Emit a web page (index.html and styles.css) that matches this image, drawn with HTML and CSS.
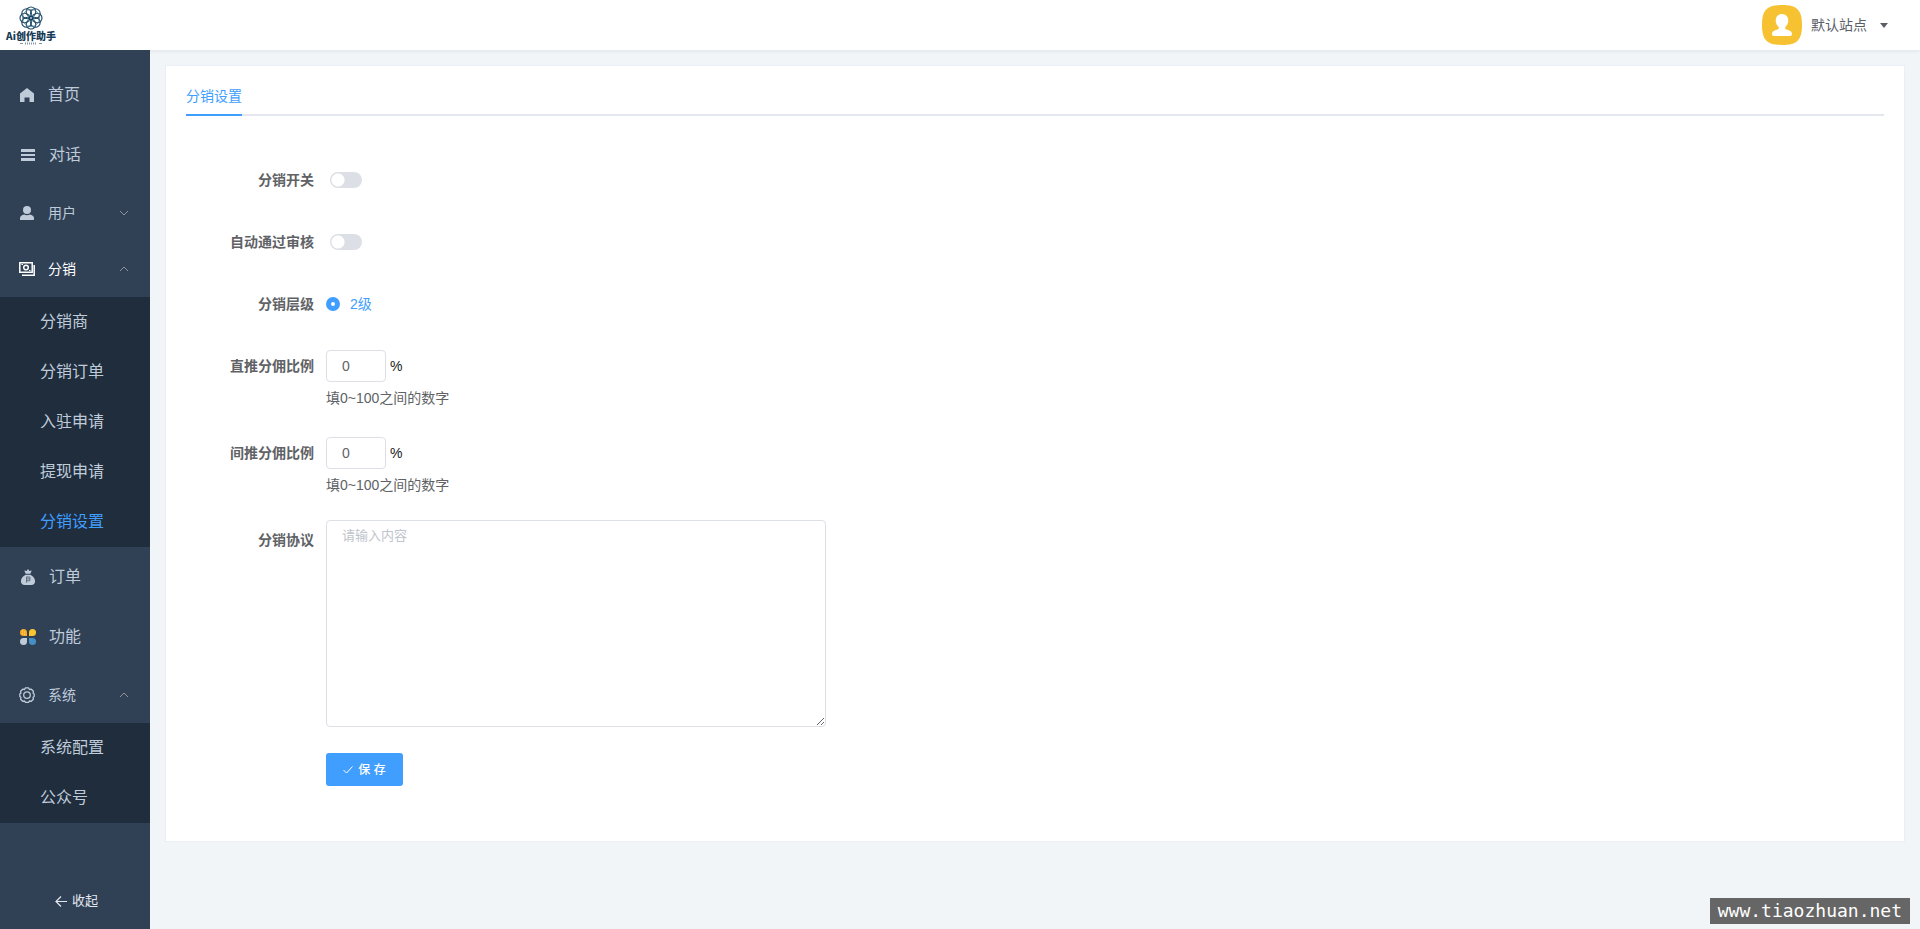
FILE: index.html
```html
<!DOCTYPE html>
<html lang="zh-CN">
<head>
<meta charset="utf-8">
<title>分销设置</title>
<link rel="stylesheet" href="styles.css">
</head>
<body>
<header class="topbar">
  <a class="logo" href="#" aria-label="Ai创作助手">
    <svg class="logo-mark" viewBox="0 0 26 24" fill="none" stroke="#1d4461" stroke-width="1.100">
      <ellipse cx="13" cy="5.800" rx="4.800" ry="4.800"/>
      <ellipse cx="13" cy="5.800" rx="4.800" ry="4.800" transform="rotate(45 13 12)"/>
      <ellipse cx="13" cy="5.800" rx="4.800" ry="4.800" transform="rotate(90 13 12)"/>
      <ellipse cx="13" cy="5.800" rx="4.800" ry="4.800" transform="rotate(135 13 12)"/>
      <ellipse cx="13" cy="5.800" rx="4.800" ry="4.800" transform="rotate(180 13 12)"/>
      <ellipse cx="13" cy="5.800" rx="4.800" ry="4.800" transform="rotate(225 13 12)"/>
      <ellipse cx="13" cy="5.800" rx="4.800" ry="4.800" transform="rotate(270 13 12)"/>
      <ellipse cx="13" cy="5.800" rx="4.800" ry="4.800" transform="rotate(315 13 12)"/>
      <g stroke="#4b86a8" stroke-width=".8"><circle cx="13" cy="12" r="8.500"/><circle cx="13" cy="12" r="3.500"/></g>
    </svg>
    <span class="logo-name">Ai创作助手</span>
    <svg class="logo-line" viewBox="0 0 22 3" stroke="#8497a5" stroke-width="1"><path d="M0 1.500h3M19 1.500h3"/><path d="M5 1.500h12" stroke-width="2" stroke-dasharray="1 1"/></svg>
  </a>
  <button class="account" type="button">
    <svg class="avatar" viewBox="0 0 40 40"><path fill="#f7c232" d="M20 0C35 0 40 5 40 20S35 40 20 40 0 35 0 20 5 0 20 0z"/><path fill="#fff" d="M20 9c4 0 6.300 3 6.300 6.500 0 3-1.300 5-3 6.500v2c3 1 6.700 2 6.700 5 0 1.500-1 2-2.500 2h-15c-1.500 0-2.500-.5-2.500-2 0-3 3.700-4 6.700-5v-2c-1.700-1.500-3-3.500-3-6.500C13.700 12 16 9 20 9z"/></svg>
    <span>默认站点</span>
    <svg class="caret" viewBox="0 0 8 5"><path fill="#5a5e66" d="M0 0h8L4 5z"/></svg>
  </button>
</header>
<div class="shell">
  <nav class="sidebar">
    <ul class="menu">
      <li><a class="item item-link" href="#"><svg class="icon" viewBox="0 0 16 16"><path fill="currentColor" d="M8 1l7 5.500V15h-4.500v-4.500h-5V15H1V6.500z"/></svg><span>首页</span></a></li>
      <li><a class="item item-link item-wide" href="#"><svg class="icon" viewBox="0 0 16 16"><path fill="currentColor" d="M1 2h14v3H1zM1 7h14v2H1zM1 11h14v3H1z"/></svg><span>对话</span></a></li>
      <li><button class="item item-group" type="button"><svg class="icon" viewBox="0 0 16 16"><circle cx="8" cy="5" r="4" fill="currentColor"/><path fill="currentColor" d="M1 15v-2c0-2 2-3 4-3.500 2 1 4 1 6 0 2 .5 4 1.500 4 3.500v1c0 .7-.3 1-1 1z"/></svg><span>用户</span><svg class="arrow" viewBox="0 0 10 6"><path d="M1 1l4 4 4-4"/></svg></button></li>
      <li>
        <button class="item item-group is-current" type="button"><svg class="icon" viewBox="0 0 16 16" fill="none" stroke="currentColor" stroke-width="1.500"><path d="M.8 1.800h12.400v9.400H.8zM15.200 4v10.200H3"/><circle cx="7" cy="6.500" r="2.300"/><path d="M2.500 3.500h1.500M10 9.500h1.500" stroke-width="1"/></svg><span>分销</span><svg class="arrow" viewBox="0 0 10 6"><path d="M1 5l4-4 4 4"/></svg></button>
        <ul class="submenu">
          <li><a href="#">分销商</a></li>
          <li><a href="#">分销订单</a></li>
          <li><a href="#">入驻申请</a></li>
          <li><a href="#">提现申请</a></li>
          <li><a class="is-active" href="#">分销设置</a></li>
        </ul>
      </li>
      <li><a class="item item-link item-wide" href="#"><svg class="icon" viewBox="0 0 16 17"><path fill="currentColor" d="M8 0l1.500 2L12 1.700 10.500 5h-5L4 1.700l2.500.3zM5.500 6h5C13.500 7.500 15.500 10 15.500 13c0 2.500-1.500 4-4 4h-7C2 17 .5 15.500.5 13c0-3 2-5.500 5-7z"/><path fill="none" stroke="#58697c" d="M6 8.500h4M6 10.500h4M6 12.500h4M6.500 14.500v-6M10 8.500v4"/></svg><span>订单</span></a></li>
      <li><a class="item item-link item-wide" href="#"><svg class="icon" viewBox="0 0 16 16"><path fill="#f7a928" d="M3.500 0A3.500 3.500 0 017 3.500V7H3.500a3.500 3.500 0 010-7z"/><path fill="#fec52e" d="M12.500 0a3.500 3.500 0 010 7H9V3.500A3.500 3.500 0 0112.500 0z"/><path fill="#bfcbd9" d="M3.500 9H7v3.500A3.500 3.500 0 113.500 9z"/><path fill="#468fc4" d="M9 9h3.500A3.500 3.500 0 119 12.500z"/><path stroke="#ffdc76" d="M2 2h1M4 3h1M2 4.500h1M4 5.500h1"/></svg><span>功能</span></a></li>
      <li>
        <button class="item item-group" type="button"><svg class="icon" viewBox="0 0 16 16" fill="none" stroke="currentColor" stroke-width="1.300"><path stroke-linejoin="round" d="M6.500.8h3l.9 1.700 1.900-.3 2.100 2.100-.3 1.900 1.100.8v2.500l-1.100.8.3 1.900-2.100 2.100-1.900-.3-.9 1.300h-3l-.9-1.300-1.900.3-2.100-2.100.3-1.900L.8 9.500V7l1.100-.8-.3-1.900 2.100-2.100 1.900.3z"/><circle cx="8" cy="8.100" r="3.300"/></svg><span>系统</span><svg class="arrow" viewBox="0 0 10 6"><path d="M1 5l4-4 4 4"/></svg></button>
        <ul class="submenu">
          <li><a href="#">系统配置</a></li>
          <li><a href="#">公众号</a></li>
        </ul>
      </li>
    </ul>
    <button class="collapse" type="button"><svg viewBox="0 0 12 11" fill="none" stroke="currentColor" stroke-width="1.200"><path d="M12 5.500H1M6 .5l-5 5 5 5"/></svg><span>收起</span></button>
  </nav>
  <main class="main">
    <section class="card">
      <div class="tabs"><a class="tab" href="#">分销设置</a></div>
      <form class="form">
        <div class="row"><label class="label" for="enable">分销开关</label><div class="field"><input class="switch" id="enable" type="checkbox"></div></div>
        <div class="row"><label class="label" for="auto">自动通过审核</label><div class="field"><input class="switch" id="auto" type="checkbox"></div></div>
        <div class="row"><span class="label">分销层级</span><div class="field"><label class="radio"><input type="radio" name="level" checked><span>2级</span></label></div></div>
        <div class="row"><label class="label" for="direct">直推分佣比例</label><div><div class="field"><input class="number" id="direct" type="text" value="0"><span>%</span></div><p class="hint">填0~100之间的数字</p></div></div>
        <div class="row"><label class="label" for="indirect">间推分佣比例</label><div><div class="field"><input class="number" id="indirect" type="text" value="0"><span>%</span></div><p class="hint">填0~100之间的数字</p></div></div>
        <div class="row"><label class="label" for="terms">分销协议</label><textarea class="terms" id="terms" placeholder="请输入内容"></textarea></div>
        <div class="row actions"><button class="save" type="button"><svg viewBox="0 0 10 8" fill="none" stroke="currentColor"><path d="M.5 4l3 3 6-6.500"/></svg><span>保 存</span></button></div>
      </form>
    </section>
  </main>
</div>
<div class="watermark">www.tiaozhuan.net</div>
</body>
</html>
```
FILE: styles.css
```css
* { box-sizing: border-box; }
body {
  margin: 0;
  min-height: 100vh;
  display: flex;
  flex-direction: column;
  background: #f1f5f8;
  color: #222;
  font: 14px/20px "Liberation Sans", "Noto Sans CJK SC", sans-serif;
}
button, input, textarea { font: inherit; color: inherit; }
button { margin: 0; padding: 0; border: 0; background: none; cursor: pointer; }
a { color: inherit; text-decoration: none; }
ul { margin: 0; padding: 0; list-style: none; }
svg { display: block; flex: none; }

.topbar {
  position: relative;
  display: flex;
  justify-content: space-between;
  align-items: center;
  height: 50px;
  padding: 0 32px 0 5px;
  background: #fff;
  box-shadow: 0 1px 4px rgba(0, 21, 41, .08);
}
.logo { display: flex; flex-direction: column; align-items: center; width: 52px; }
.logo-mark { width: 26px; height: 24px; }
.logo-name { color: #173a56; font: 900 10px/12px "Noto Sans CJK SC", sans-serif; white-space: nowrap; }
.logo-line { width: 22px; height: 3px; }
.account { display: flex; align-items: center; color: #5a5e66; }
.avatar { width: 40px; height: 40px; margin-right: 9px; }
.caret { width: 8px; height: 5px; margin-left: 13px; }

.shell { display: flex; flex: 1; }
.sidebar {
  display: flex;
  flex-direction: column;
  justify-content: space-between;
  width: 150px;
  flex: none;
  padding: 15px 0 18px;
  background: #304156;
  color: #bfcbd9;
  position: relative;
}
.item { display: flex; align-items: center; width: 100%; padding: 0 21px 0 19px; gap: 13px; }
.item-link { height: 60px; font-size: 16px; }
.item-wide { padding-left: 20px; }
.item-group { height: 56px; }
.is-current { color: #fff; }
.icon { width: 16px; height: 16px; }
.arrow { width: 10px; height: 6px; margin-left: auto; fill: none; stroke: #909399; }
.submenu { background: #1f2d3d; font-size: 16px; }
.submenu a { display: block; padding-left: 40px; line-height: 50px; }
.submenu .is-active { color: #409eff; }
.collapse { display: flex; align-items: center; justify-content: center; gap: 5px; font-size: 13px; color: #e4e7ed; padding-left: 3px; }
.collapse svg { width: 12px; height: 11px; }

.main { flex: 1; min-width: 0; padding: 15px; }
.card { padding: 10px 20px 54px; background: #fff; border: 1px solid #ebeef5; }
.tabs { display: flex; margin-bottom: 44px; box-shadow: inset 0 -2px #e4e7ed; }
.tab { height: 40px; line-height: 40px; color: #409eff; border-bottom: 2px solid #409eff; }

.form { display: flex; flex-direction: column; gap: 22px; }
.row { display: flex; align-items: flex-start; }
.label { width: 140px; flex: none; padding-right: 12px; text-align: right; line-height: 40px; font-weight: 700; color: #606266; }
.field { display: flex; align-items: center; min-height: 40px; gap: 4px; }
.switch {
  appearance: none;
  width: 32px;
  height: 16px;
  margin: 0 4px;
  border-radius: 8px;
  background: radial-gradient(circle at 8px 8px, #fff 6px, #dcdfe6 7px);
}
.switch:checked { background: radial-gradient(circle at 24px 8px, #fff 6px, #409eff 7px); }
.radio { display: flex; align-items: center; gap: 10px; color: #409eff; }
.radio input { appearance: none; width: 14px; height: 14px; margin: 0; border: 5px solid #409eff; border-radius: 50%; background: #fff; }
.number { width: 60px; height: 32px; padding: 0 15px; border: 1px solid #dcdfe6; border-radius: 4px; background: #fff; color: #606266; }
.hint { margin: 0; line-height: 25px; color: #606266; }
.terms {
  width: 500px;
  max-width: 100%;
  height: 207px;
  padding: 5px 15px;
  border: 1px solid #dcdfe6;
  border-radius: 4px;
  font-size: 13px;
  resize: vertical;
}
.terms::placeholder { color: #c0c4cc; }
.actions { padding: 4px 0 1px 140px; }
.save { display: flex; align-items: center; justify-content: center; gap: 5px; width: 77px; height: 33px; border-radius: 3px; background: #409eff; color: #fff; font-size: 12px; font-weight: 500; }
.save svg { width: 10px; height: 8px; }

.watermark {
  position: fixed;
  right: 10px;
  bottom: 5px;
  padding: 0 8px;
  background: #666;
  color: #fff;
  font: 18px/26px "DejaVu Sans Mono", monospace;
}
```
